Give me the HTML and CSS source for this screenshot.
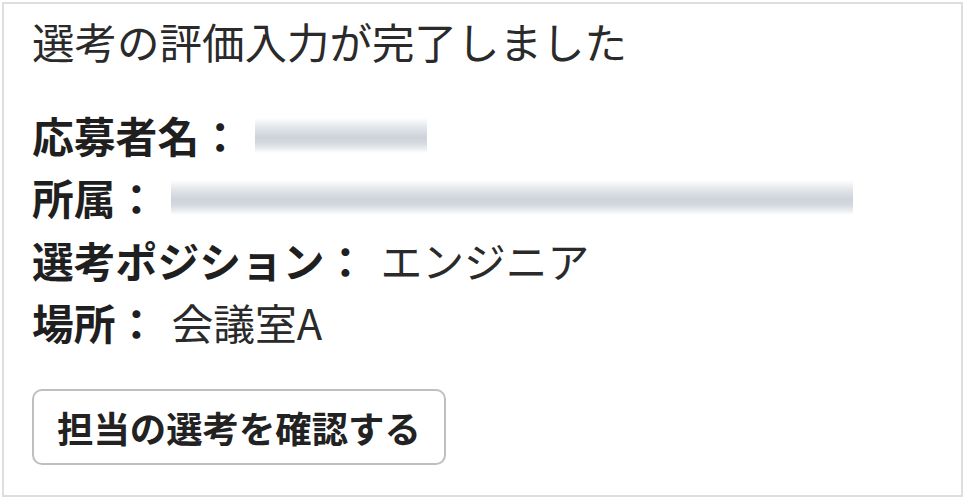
FILE: index.html
```html
<!DOCTYPE html>
<html lang="ja">
<head>
<meta charset="utf-8">
<title>選考の評価入力が完了しました</title>
<link rel="stylesheet" href="styles.css">
</head>
<body>
<div class="card">
  <h1 class="title">選考の評価入力が完了しました</h1>
  <div class="info">
    <div class="row"><span class="label">応募者名：</span><span class="redact redact-name" aria-label="非表示"></span></div>
    <div class="row"><span class="label">所属：</span><span class="redact redact-org" aria-label="非表示"></span></div>
    <div class="row"><span class="label">選考ポジション：</span><span class="value">エンジニア</span></div>
    <div class="row"><span class="label">場所：</span><span class="value">会議室A</span></div>
  </div>
  <button class="btn" type="button">担当の選考を確認する</button>
</div>
</body>
</html>
```

FILE: styles.css
```css
html, body {
  margin: 0;
  padding: 0;
  background: #ffffff;
}

body {
  font-family: "Noto Sans CJK JP", "Noto Sans", sans-serif;
  color: #222222;
}

.card {
  box-sizing: border-box;
  margin: 2px;
  width: 961px;
  height: 495px;
  border: 2px solid #dedede;
  padding: 6px 28px 0;
  background: #ffffff;
}

.title {
  margin: 0;
  font-size: 42.5px;
  line-height: 62px;
  font-weight: 400;
  color: #2a2a2a;
}

.info {
  margin-top: 32px;
}

.row {
  display: flex;
  align-items: center;
  gap: 14px;
  font-size: 41.8px;
  line-height: 62.4px;
  height: 62.4px;
}

.label {
  font-weight: 700;
  color: #1f1f1f;
}

.value {
  font-weight: 400;
  color: #2a2a2a;
}

.redact {
  display: block;
  height: 35px;
  background: linear-gradient(to bottom, #ffffff 0%, #e4e7eb 25%, #cdd3da 55%, #d3d8de 70%, #eef0f2 90%, #ffffff 100%);
}

.redact-name {
  width: 172px;
}

.redact-org {
  width: 682px;
}

.btn {
  display: block;
  margin-top: 35px;
  padding: 9px 23px;
  border: 2px solid #bfbfbf;
  border-radius: 10px;
  background: #ffffff;
  font-family: "Noto Sans CJK JP", "Noto Sans", sans-serif;
  font-size: 36.4px;
  line-height: 54.6px;
  font-weight: 700;
  color: #222222;
  cursor: pointer;
}
```
